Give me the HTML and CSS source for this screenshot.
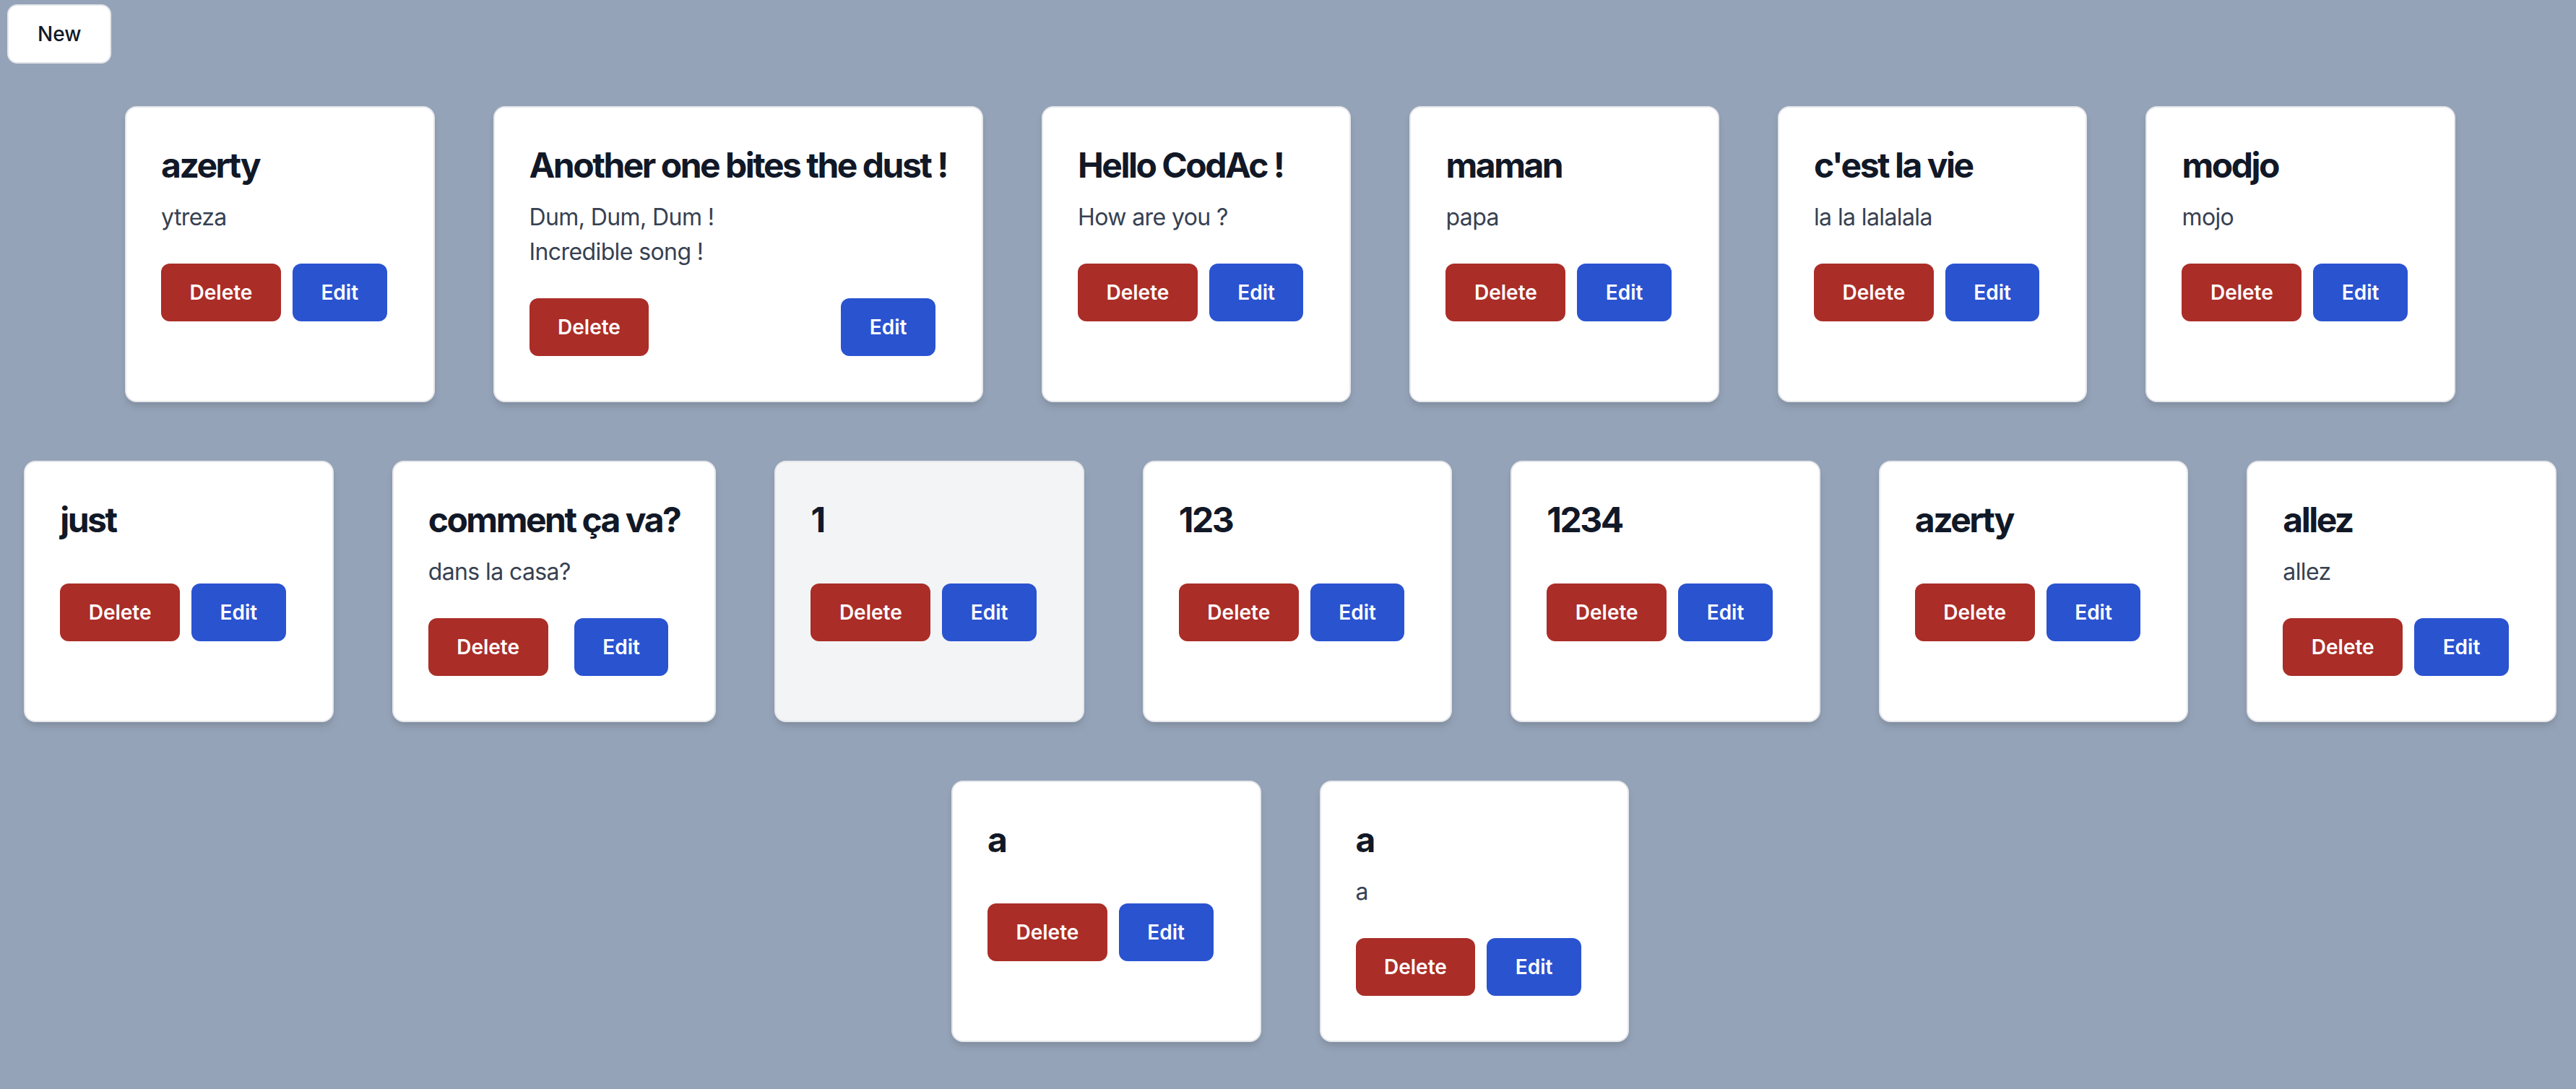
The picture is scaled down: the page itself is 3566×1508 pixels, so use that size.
FILE: index.html
```html
<!DOCTYPE html>
<html lang="fr">
<head>
<meta charset="utf-8">
<title>Notes</title>
<link rel="stylesheet" href="styles.css">
</head>
<body>
<div class="page">
  <div class="toolbar">
    <button class="btn-new">New</button>
  </div>
  <div class="board">
    <div class="card">
      <h2 class="card-title">azerty</h2>
      <p class="card-text">ytreza</p>
      <div class="card-actions"><button class="btn btn-delete">Delete</button><button class="btn btn-edit">Edit</button></div>
    </div>
    <div class="card">
      <h2 class="card-title">Another one bites the dust !</h2>
      <p class="card-text">Dum, Dum, Dum !<br>Incredible song !</p>
      <div class="card-actions"><button class="btn btn-delete">Delete</button><button class="btn btn-edit">Edit</button></div>
    </div>
    <div class="card">
      <h2 class="card-title">Hello CodAc !</h2>
      <p class="card-text">How are you ?</p>
      <div class="card-actions"><button class="btn btn-delete">Delete</button><button class="btn btn-edit">Edit</button></div>
    </div>
    <div class="card">
      <h2 class="card-title">maman</h2>
      <p class="card-text">papa</p>
      <div class="card-actions"><button class="btn btn-delete">Delete</button><button class="btn btn-edit">Edit</button></div>
    </div>
    <div class="card">
      <h2 class="card-title">c'est la vie</h2>
      <p class="card-text">la la lalalala</p>
      <div class="card-actions"><button class="btn btn-delete">Delete</button><button class="btn btn-edit">Edit</button></div>
    </div>
    <div class="card">
      <h2 class="card-title">modjo</h2>
      <p class="card-text">mojo</p>
      <div class="card-actions"><button class="btn btn-delete">Delete</button><button class="btn btn-edit">Edit</button></div>
    </div>
    <div class="card">
      <h2 class="card-title">just</h2>
      <p class="card-text"></p>
      <div class="card-actions"><button class="btn btn-delete">Delete</button><button class="btn btn-edit">Edit</button></div>
    </div>
    <div class="card">
      <h2 class="card-title">comment ça va?</h2>
      <p class="card-text">dans la casa?</p>
      <div class="card-actions"><button class="btn btn-delete">Delete</button><button class="btn btn-edit">Edit</button></div>
    </div>
    <div class="card card-muted">
      <h2 class="card-title">1</h2>
      <p class="card-text"></p>
      <div class="card-actions"><button class="btn btn-delete">Delete</button><button class="btn btn-edit">Edit</button></div>
    </div>
    <div class="card">
      <h2 class="card-title">123</h2>
      <p class="card-text"></p>
      <div class="card-actions"><button class="btn btn-delete">Delete</button><button class="btn btn-edit">Edit</button></div>
    </div>
    <div class="card">
      <h2 class="card-title">1234</h2>
      <p class="card-text"></p>
      <div class="card-actions"><button class="btn btn-delete">Delete</button><button class="btn btn-edit">Edit</button></div>
    </div>
    <div class="card">
      <h2 class="card-title">azerty</h2>
      <p class="card-text"></p>
      <div class="card-actions"><button class="btn btn-delete">Delete</button><button class="btn btn-edit">Edit</button></div>
    </div>
    <div class="card">
      <h2 class="card-title">allez</h2>
      <p class="card-text">allez</p>
      <div class="card-actions"><button class="btn btn-delete">Delete</button><button class="btn btn-edit">Edit</button></div>
    </div>
    <div class="card">
      <h2 class="card-title">a</h2>
      <p class="card-text"></p>
      <div class="card-actions"><button class="btn btn-delete">Delete</button><button class="btn btn-edit">Edit</button></div>
    </div>
    <div class="card">
      <h2 class="card-title">a</h2>
      <p class="card-text">a</p>
      <div class="card-actions"><button class="btn btn-delete">Delete</button><button class="btn btn-edit">Edit</button></div>
    </div>
  </div>
</div>
</body>
</html>
```

FILE: styles.css
```css
* {
  box-sizing: border-box;
}

html,
body {
  margin: 0;
  padding: 0;
}

body {
  background: #95a3b8;
  font-family: Inter, "Noto Sans", "Liberation Sans", sans-serif;
  min-height: 100vh;
}

.page {
  display: flex;
  flex-direction: column;
}

.toolbar {
  display: flex;
  padding: 6px 0 0 10px;
}

.btn-new {
  font-family: Inter, "Noto Sans", sans-serif;
  font-size: 28px;
  line-height: 40px;
  font-weight: 500;
  color: #111827;
  background: #ffffff;
  border: 2px solid #e5e7eb;
  border-radius: 14px;
  padding: 19px 40px;
  cursor: pointer;
}

.board {
  display: flex;
  flex-wrap: wrap;
  justify-content: center;
  align-items: stretch;
  gap: 81px 81px;
  margin-top: 59px;
  padding-left: 6px;
}

.card {
  display: flex;
  flex-direction: column;
  background: #ffffff;
  border: 2px solid #e5e7eb;
  border-radius: 16px;
  box-shadow: 0 8px 12px -2px rgba(0, 0, 0, 0.1), 0 4px 8px -4px rgba(0, 0, 0, 0.1);
  padding: 48px 48px 62px;
}

.card-muted {
  background: #f3f4f6;
}

.card-title {
  margin: 0 0 16px;
  font-size: 48px;
  line-height: 64px;
  font-weight: 700;
  letter-spacing: -2.5px;
  color: #111827;
  white-space: nowrap;
}

.card-text {
  margin: 0;
  font-size: 32px;
  line-height: 48px;
  letter-spacing: -0.6px;
  color: #374151;
}

.card-actions {
  display: flex;
  justify-content: space-between;
  margin-top: 40px;
}

.btn {
  font-family: Inter, "Noto Sans", sans-serif;
  font-size: 28px;
  line-height: 40px;
  font-weight: 600;
  color: #ffffff;
  border: 0;
  border-radius: 12px;
  padding: 20px 39.5px;
  margin-right: 16px;
  cursor: pointer;
}

.btn-delete {
  background: #aa2d28;
}

.btn-edit {
  background: #2a53d0;
}
```
